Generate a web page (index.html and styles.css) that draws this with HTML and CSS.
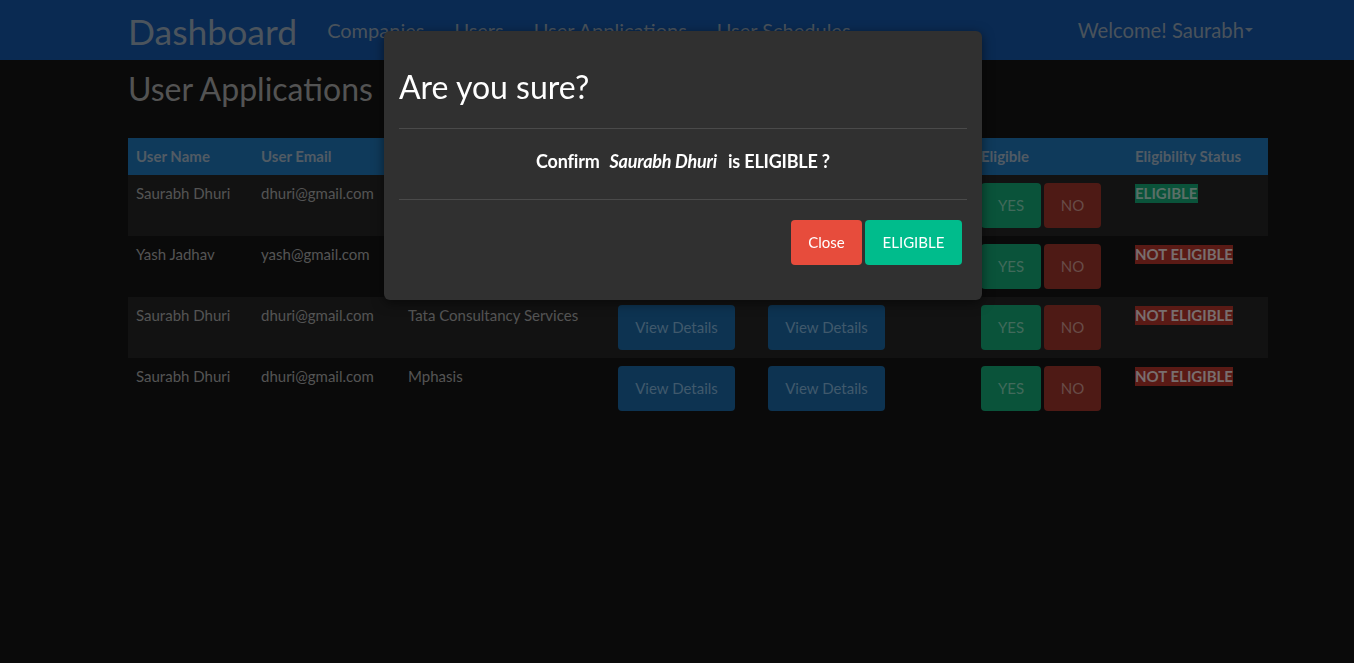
FILE: index.html
```html
<!DOCTYPE html>
<html lang="en">
<head>
<meta charset="utf-8">
<title>User Applications</title>
<link rel="stylesheet" href="styles.css">
</head>
<body>
<nav class="navbar">
  <div class="container nav-inner">
    <a class="brand" href="#">Dashboard</a>
    <ul class="nav-links">
      <li><a href="#">Companies</a></li>
      <li><a href="#">Users</a></li>
      <li><a href="#">User Applications</a></li>
      <li><a href="#">User Schedules</a></li>
    </ul>
    <div class="welcome">Welcome! Saurabh<span class="caret"></span></div>
  </div>
</nav>
<main class="container">
  <h1 class="page-title">User Applications</h1>
  <table class="apps">
    <colgroup>
      <col class="c1"><col class="c2"><col class="c3"><col class="c4"><col class="c5"><col class="c6"><col class="c7">
    </colgroup>
    <thead>
      <tr>
        <th>User Name</th><th>User Email</th><th>Company Name</th><th>User Details</th><th>Company Details</th><th>Eligible</th><th>Eligibility Status</th>
      </tr>
    </thead>
    <tbody>
      <tr class="odd">
        <td>Saurabh Dhuri</td><td>dhuri@gmail.com</td><td>Infosys</td>
        <td><button class="btn btn-info">View Details</button></td>
        <td><button class="btn btn-info">View Details</button></td>
        <td><div class="yn"><button class="btn btn-yes">YES</button><button class="btn btn-no">NO</button></div></td>
        <td><span class="status ok">ELIGIBLE</span></td>
      </tr>
      <tr>
        <td>Yash Jadhav</td><td>yash@gmail.com</td><td>Wipro</td>
        <td><button class="btn btn-info">View Details</button></td>
        <td><button class="btn btn-info">View Details</button></td>
        <td><div class="yn"><button class="btn btn-yes">YES</button><button class="btn btn-no">NO</button></div></td>
        <td><span class="status bad">NOT ELIGIBLE</span></td>
      </tr>
      <tr class="odd">
        <td>Saurabh Dhuri</td><td>dhuri@gmail.com</td><td>Tata Consultancy Services</td>
        <td><button class="btn btn-info">View Details</button></td>
        <td><button class="btn btn-info">View Details</button></td>
        <td><div class="yn"><button class="btn btn-yes">YES</button><button class="btn btn-no">NO</button></div></td>
        <td><span class="status bad">NOT ELIGIBLE</span></td>
      </tr>
      <tr>
        <td>Saurabh Dhuri</td><td>dhuri@gmail.com</td><td>Mphasis</td>
        <td><button class="btn btn-info">View Details</button></td>
        <td><button class="btn btn-info">View Details</button></td>
        <td><div class="yn"><button class="btn btn-yes">YES</button><button class="btn btn-no">NO</button></div></td>
        <td><span class="status bad">NOT ELIGIBLE</span></td>
      </tr>
    </tbody>
  </table>
</main>

<div class="backdrop"></div>

<div class="modal">
  <div class="modal-header">
    <h2 class="modal-title">Are you sure?</h2>
  </div>
  <div class="modal-body">
    <p><span>Confirm</span><em class="who">Saurabh Dhuri</em><span>is ELIGIBLE ?</span></p>
  </div>
  <div class="modal-footer">
    <button class="btn btn-close">Close</button>
    <button class="btn btn-eligible">ELIGIBLE</button>
  </div>
</div>
</body>
</html>
```

FILE: styles.css
```css
* { box-sizing: border-box; }

html, body {
  margin: 0;
  padding: 0;
}

body {
  background: #141414;
  font-family: Lato, "Open Sans", "Liberation Sans", sans-serif;
  font-size: 15px;
  color: #b0b0b0;
  min-height: 663px;
}

.container {
  width: 1140px;
  margin-left: 128px;
}

/* Navbar */
.navbar {
  background: #1454a4;
  height: 60px;
}

.nav-inner {
  display: flex;
  align-items: center;
  height: 60px;
}

.brand {
  font-size: 35.5px;
  color: #96a8ba;
  text-decoration: none;
  margin-top: 2px;
  margin-right: 15px;
}

.nav-links {
  display: flex;
  list-style: none;
  margin: 0;
  padding: 0;
}

.nav-links a {
  display: block;
  padding: 0 15px;
  font-size: 20px;
  color: #92a4b6;
  text-decoration: none;
}

.welcome {
  margin-left: auto;
  margin-right: 15px;
  font-size: 20.25px;
  color: #92a4b6;
  display: flex;
  align-items: center;
}

.caret {
  display: inline-block;
  width: 0;
  height: 0;
  margin-left: 1px;
  border-top: 4px solid #92a4b6;
  border-left: 4px solid transparent;
  border-right: 4px solid transparent;
}

/* Page */
.page-title {
  font-size: 32px;
  font-weight: 400;
  color: #a6a6a6;
  margin: 10px 0 29.6px;
  line-height: 1.2;
}

.apps {
  width: 1140px;
  border-collapse: collapse;
  table-layout: fixed;
}

.c1 { width: 125px; }
.c2 { width: 147px; }
.c3 { width: 210px; }
.c4 { width: 150px; }
.c5 { width: 213px; }
.c6 { width: 154px; }
.c7 { width: 141px; }

.apps thead th {
  background: #1e74b6;
  color: #a2b6c8;
  font-weight: 700;
  text-align: left;
  padding: 0 8px;
  height: 37px;
  font-size: 15px;
}

.apps td {
  padding: 8px;
  height: 61px;
  vertical-align: top;
  line-height: 21px;
  font-size: 15px;
  color: #a8a8a8;
}

.apps tr.odd td {
  background: #242424;
}

.btn {
  font-family: Lato, "Open Sans", "Liberation Sans", sans-serif;
  font-size: 15px;
  border: 0;
  border-radius: 4px;
  height: 45px;
  padding: 0 16px;
  cursor: pointer;
  line-height: 45px;
}

.btn-info {
  background: #1a66a2;
  color: #80b2d8;
  width: 117px;
  padding: 0;
}

.yn {
  display: flex;
  gap: 3px;
}

.btn-yes {
  background: #14a674;
  color: #82d4b6;
  width: 60px;
  padding: 0;
}

.btn-no {
  background: #9c342a;
  color: #d09890;
  width: 57px;
  padding: 0;
}

.status {
  display: inline-block;
  font-weight: 700;
  line-height: 19px;
  margin-top: 1px;
}

.status.ok {
  background: #14a674;
  color: #b4dece;
}

.status.bad {
  background: #b4342a;
  color: #f0dcdc;
}

/* Modal */
.backdrop {
  position: fixed;
  inset: 0;
  background: rgba(0, 0, 0, 0.5);
}

.modal {
  position: absolute;
  top: 31px;
  left: 384px;
  width: 598px;
  height: 269px;
  background: #303030;
  border-radius: 6px;
  box-shadow: 0 3px 12px rgba(0, 0, 0, 0.5);
  padding: 0 15px;
  color: #ffffff;
}

.modal-header {
  height: 98px;
  border-bottom: 1px solid #4a4a4a;
  display: flex;
  align-items: flex-end;
}

.modal-title {
  margin: 0 0 25px;
  font-size: 32px;
  font-weight: 400;
  line-height: 1;
}

.modal-body {
  height: 71px;
  border-bottom: 1px solid #4a4a4a;
  display: flex;
  align-items: center;
  justify-content: center;
}

.modal-body p {
  margin: 0 0 6px;
  font-size: 18px;
  font-weight: 700;
  letter-spacing: -0.2px;
}

.modal-body .who {
  font-style: italic;
  font-weight: 700;
  margin: 0 11px 0 10px;
}

.modal-footer {
  display: flex;
  justify-content: flex-end;
  gap: 3px;
  padding-top: 20px;
  padding-right: 5px;
}

.btn-close {
  background: #e74c3c;
  color: #ffffff;
  width: 71px;
  padding: 0;
}

.btn-eligible {
  background: #00bc8c;
  color: #ffffff;
  width: 97px;
  padding: 0;
}
```
